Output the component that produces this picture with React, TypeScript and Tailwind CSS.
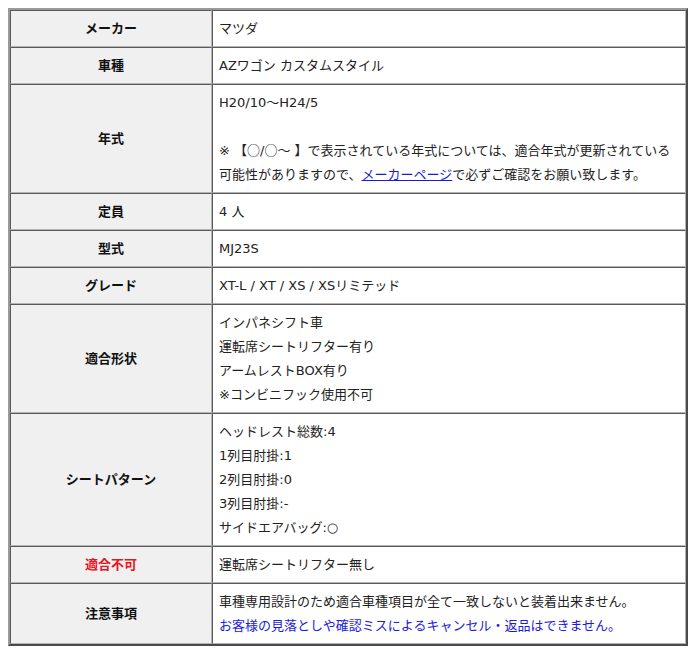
const CJK = "font-['Noto_Sans_CJK_JP',sans-serif] leading-[0]";

const ROWS: { label: string; red?: boolean; lines: React.ReactNode[] }[] = [
  { label: "メーカー", lines: ["マツダ"] },
  { label: "車種", lines: ["AZワゴン カスタムスタイル"] },
  {
    label: "年式",
    lines: [
      "H20/10～H24/5",
      "\u00a0",
      <>
        ※ 【<span className={CJK}>○</span>/<span className={CJK}>○</span>～ 】で表示されている年式については、適合年式が更新されている
      </>,
      <>
        可能性がありますので、
        <a href="#" className="text-[#1a1ad6] underline">
          メーカーページ
        </a>
        で必ずご確認をお願い致します。
      </>,
    ],
  },
  { label: "定員", lines: ["4 人"] },
  { label: "型式", lines: ["MJ23S"] },
  { label: "グレード", lines: ["XT-L / XT / XS / XSリミテッド"] },
  {
    label: "適合形状",
    lines: ["インパネシフト車", "運転席シートリフター有り", "アームレストBOX有り", "※コンビニフック使用不可"],
  },
  {
    label: "シートパターン",
    lines: ["ヘッドレスト総数:4", "1列目肘掛:1", "2列目肘掛:0", "3列目肘掛:-", "サイドエアバッグ:○"],
  },
  { label: "適合不可", red: true, lines: ["運転席シートリフター無し"] },
  {
    label: "注意事項",
    lines: [
      "車種専用設計のため適合車種項目が全て一致しないと装着出来ません。",
      <span className="text-[#1a1ae0]">お客様の見落としや確認ミスによるキャンセル・返品はできません。</span>,
    ],
  },
];

export default function App() {
  return (
    <div className="min-h-[652px] w-[700px] bg-white p-2 font-['DejaVu_Sans','Noto_Sans_CJK_JP',sans-serif] text-[13px] leading-[24px]">
      <table className="w-[680px] border-separate border-spacing-0 border-2 border-t-[#9a9a9a] border-l-[#9a9a9a] border-r-[#4a4a4a] border-b-[#4a4a4a]">
        <tbody>
          {ROWS.map((row) => (
            <tr key={row.label}>
              {/* label column */}
              <td
                className={
                  "w-[202px] border border-t-[#5a5a5a] border-l-[#5a5a5a] border-r-[#b4b4b4] border-b-[#b4b4b4] bg-[#f0f0f0] pt-[6px] pb-[5px] text-center align-middle font-bold " +
                  (row.red ? "text-[#e8141e]" : "text-[#111]")
                }
              >
                {row.label}
              </td>
              <td className="border border-t-[#5a5a5a] border-l-[#5a5a5a] border-r-[#b4b4b4] border-b-[#b4b4b4] bg-white pt-[6px] pb-[5px] pl-[6px] pr-[4px] align-middle text-[#222]">
                {row.lines.map((line, i) => (
                  <div key={i} className="h-[24px] whitespace-nowrap">
                    {line}
                  </div>
                ))}
              </td>
            </tr>
          ))}
        </tbody>
      </table>
    </div>
  );
}
